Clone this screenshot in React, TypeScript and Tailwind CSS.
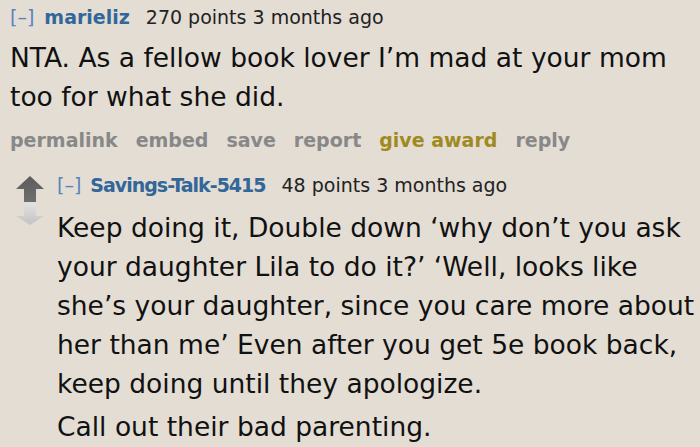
import React from 'react';

const font = { fontFamily: '"DejaVu Sans", Verdana, sans-serif' };

const UpArrow: React.FC = () => (
  <svg width="30" height="26" viewBox="0 0 30 26">
    <defs>
      <linearGradient id="up" x1="0" y1="0" x2="0" y2="1">
        <stop offset="0" stopColor="#5c5c5c" />
        <stop offset="1" stopColor="#6e6e6e" />
      </linearGradient>
    </defs>
    <path d="M15 0 L29 13 L21 13 L21 26 L9 26 L9 13 L1 13 Z" fill="url(#up)" />
  </svg>
);

const DownArrow: React.FC = () => (
  <svg width="30" height="22" viewBox="0 0 30 22">
    <defs>
      <linearGradient id="down" x1="0" y1="0" x2="0" y2="1">
        <stop offset="0" stopColor="#e2e2e2" />
        <stop offset="1" stopColor="#c2c2c2" />
      </linearGradient>
    </defs>
    <path d="M9 0 L21 0 L21 13 L29 13 L15 22 L1 13 L9 13 Z" fill="url(#down)" />
  </svg>
);

const Tagline: React.FC<{ author: string; points: string; tight?: boolean }> = ({ author, points, tight }) => (
  <div className="flex items-baseline whitespace-nowrap text-[19px] leading-[22px] text-[#222]">
    <span className="text-[#5a82bd]">[–]</span>
    <span className={tight ? 'ml-[9px] font-bold text-[#336699] tracking-[-1px]' : 'ml-[10px] font-bold text-[#336699]'}>
      {author}
    </span>
    <span className="ml-[16px]">{points} points 3 months ago</span>
  </div>
);

export default function App() {
  return (
    <div className="w-[700px] h-[447px] overflow-hidden bg-[#e3ddd4]" style={font}>
      <div className="pl-[10px] pt-[6px]">
        <Tagline author="marieliz" points="270" />
        <div className="mt-[10px] whitespace-nowrap text-[26.5px] leading-[39px] text-[#111]">
          NTA. As a fellow book lover I’m mad at your mom
          <br />
          too for what she did.
        </div>
        <div className="mt-[13px] flex gap-[18px] whitespace-nowrap text-[19px] leading-[22px] font-bold text-[#888]">
          <span>permalink</span>
          <span>embed</span>
          <span>save</span>
          <span>report</span>
          <span className="text-[#a08a1e]">give award</span>
          <span>reply</span>
        </div>

        <div className="mt-[23px] flex">
          <div className="w-[40px] shrink-0 flex flex-col items-center pt-[2px] gap-[1px]">
            <UpArrow />
            <DownArrow />
          </div>
          <div className="ml-[7px] flex-1">
            <Tagline author="Savings-Talk-5415" points="48" tight />
            <div className="mt-[12px] whitespace-nowrap text-[26.5px] leading-[39px] text-[#111]">
              <p>
                Keep doing it, Double down ‘why don’t you ask
                <br />
                your daughter Lila to do it?’ ‘Well, looks like
                <br />
                she’s your daughter, since you care more about
                <br />
                her than me’ Even after you get 5e book back,
                <br />
                keep doing until they apologize.
              </p>
              <p className="mt-[4px]">Call out their bad parenting.</p>
            </div>
          </div>
        </div>
      </div>
    </div>
  );
}
